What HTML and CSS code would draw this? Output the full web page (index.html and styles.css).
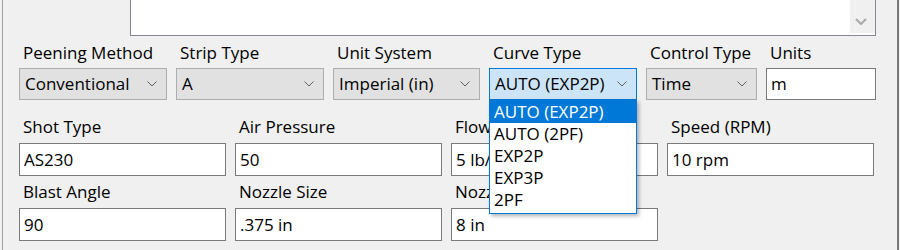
FILE: index.html
```
<!doctype html>
<html>
<head>
    <meta charset="utf-8">
    <title>Peening Setup</title>
    <link rel="stylesheet" href="styles.css">
</head>
<body>
<div class="panel">
    <div class="notes">
        <div class="notes-scroll">
            <svg width="12" height="7" viewBox="0 0 12 7"><polyline points="1,1 6,6 11,1" fill="none" stroke="#a8a8a8" stroke-width="2"/></svg>
        </div>
    </div>

    <div class="combos">
        <div class="field">
            <label>Peening Method</label>
            <div class="combo"><span>Conventional</span><svg width="10" height="6" viewBox="0 0 10 6"><polyline points="0.5,0.5 5,5 9.5,0.5" fill="none" stroke="#606060"/></svg></div>
        </div>
        <div class="field">
            <label>Strip Type</label>
            <div class="combo"><span>A</span><svg width="10" height="6" viewBox="0 0 10 6"><polyline points="0.5,0.5 5,5 9.5,0.5" fill="none" stroke="#606060"/></svg></div>
        </div>
        <div class="field">
            <label>Unit System</label>
            <div class="combo"><span>Imperial (in)</span><svg width="10" height="6" viewBox="0 0 10 6"><polyline points="0.5,0.5 5,5 9.5,0.5" fill="none" stroke="#606060"/></svg></div>
        </div>
        <div class="field">
            <label>Curve Type</label>
            <div class="combo open"><span>AUTO (EXP2P)</span><svg width="10" height="6" viewBox="0 0 10 6"><polyline points="0.5,0.5 5,5 9.5,0.5" fill="none" stroke="#606060"/></svg>
                <ul class="droplist">
                    <li class="selected">AUTO (EXP2P)</li>
                    <li>AUTO (2PF)</li>
                    <li>EXP2P</li>
                    <li>EXP3P</li>
                    <li>2PF</li>
                </ul>
            </div>
        </div>
        <div class="field">
            <label>Control Type</label>
            <div class="combo"><span>Time</span><svg width="10" height="6" viewBox="0 0 10 6"><polyline points="0.5,0.5 5,5 9.5,0.5" fill="none" stroke="#606060"/></svg></div>
        </div>
        <div class="field">
            <label>Units</label>
            <input class="textbox short" type="text" value="m">
        </div>
    </div>

    <div class="inputs">
        <div class="field">
            <label>Shot Type</label>
            <input class="textbox" type="text" value="AS230">
        </div>
        <div class="field">
            <label>Air Pressure</label>
            <input class="textbox" type="text" value="50">
        </div>
        <div class="field">
            <label>Flow Rate</label>
            <input class="textbox" type="text" value="5 lb/min">
        </div>
        <div class="field">
            <label>Speed (RPM)</label>
            <input class="textbox" type="text" value="10 rpm">
        </div>
        <div class="field">
            <label>Blast Angle</label>
            <input class="textbox" type="text" value="90">
        </div>
        <div class="field">
            <label>Nozzle Size</label>
            <input class="textbox" type="text" value=".375 in">
        </div>
        <div class="field">
            <label>Nozzle Distance</label>
            <input class="textbox" type="text" value="8 in">
        </div>
    </div>
</div>
</body>
</html>
```

FILE: styles.css
```
* { box-sizing: border-box; }

html, body {
    margin: 0;
    height: 100%;
}

body {
    background: #f0f0f0;
    font: 17px/20px "Open Sans", "Noto Sans", sans-serif;
    color: #000;
    overflow: hidden;
}

.panel {
    margin-left: 2px;
    width: 897px;
    height: 250px;
    border-left: 1px solid #a0a0a0;
    border-right: 2px solid #7a7a7a;
}

/* notes box, top edge scrolled out of view */
.notes {
    margin-left: 127px;
    width: 746px;
    height: 36px;
    background: #fff;
    border: 1px solid #828790;
    border-top: 0;
    display: flex;
    justify-content: flex-end;
}

.notes-scroll {
    width: 25px;
    height: 33px;
    background: #f0f0f0;
    padding: 18px 0 0 5px;
}

.notes-scroll svg { display: block; }

.combos {
    display: grid;
    grid-template-columns: 148px 148px 147px 148px 111px 110px;
    column-gap: 9px;
    margin-top: 7px;
    padding-left: 16px;
}

.inputs {
    display: grid;
    grid-template-columns: repeat(4, 207px);
    column-gap: 9px;
    row-gap: 6px;
    margin-top: 17px;
    padding-left: 16px;
}

.field {
    display: flex;
    flex-direction: column;
}

.field label {
    height: 20px;
    padding-left: 4px;
    white-space: nowrap;
}

.combos label { margin-bottom: 5px; }
.inputs label { margin-bottom: 6px; }

.combo {
    position: relative;
    height: 32px;
    display: flex;
    align-items: center;
    justify-content: space-between;
    padding: 0 9px 0 5px;
    background: #e1e1e1;
    border: 1px solid #adadad;
    white-space: nowrap;
}

.combo svg { display: block; }

.combo.open {
    background: #cce4f7;
    border-color: #0078d7;
}

.droplist {
    position: absolute;
    top: calc(100% + 1px);
    left: -1px;
    width: 148px;
    margin: 0;
    padding: 0 0 2px;
    list-style: none;
    background: #fff;
    border: 1px solid #0078d7;
    box-shadow: 2px 2px 4px rgba(0,0,0,.3);
    z-index: 10;
}

.droplist li {
    height: 22px;
    line-height: 22px;
    padding-left: 4px;
    white-space: nowrap;
}

.droplist li.selected {
    background: #0078d7;
    color: #fff;
}

.textbox {
    display: block;
    width: 100%;
    height: 33px;
    margin: 0;
    padding: 0 0 1px 4px;
    font: inherit;
    color: #000;
    background: #fff;
    border: 1px solid #7a7a7a;
    border-radius: 0;
    outline: none;
}

.textbox.short { height: 32px; }
```
